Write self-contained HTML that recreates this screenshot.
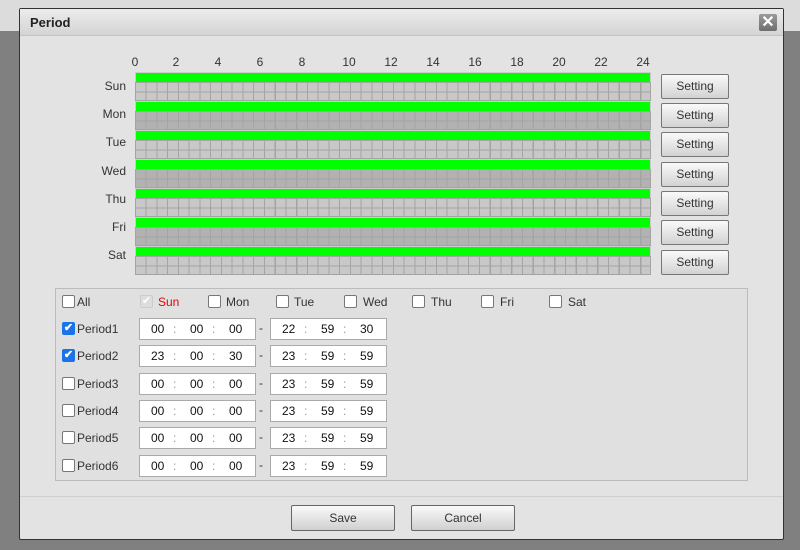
<!DOCTYPE html>
<html><head><meta charset="utf-8"><style>
*{margin:0;padding:0;box-sizing:border-box}
body{width:800px;height:550px;position:relative;overflow:hidden;background:#808080;font-family:"Liberation Sans",Arial,sans-serif;font-size:12px;color:#333}
.a{position:absolute}
#top{left:0;top:0;width:800px;height:31px;background:#dcdcdc}
#dlg{left:19px;top:8px;width:765px;height:532px;background:#e3e3e3;border:1px solid #333;border-radius:2px}
#tb{left:0;top:0;width:763px;height:27px;background:linear-gradient(#ececec,#d4d4d4);border-bottom:1px solid #c4c4c4}
#tb b{position:absolute;left:10px;top:6px;font-size:13px;color:#222}
#x{left:739px;top:5px;width:18px;height:17px;background:linear-gradient(#9a9a9a,#6e6e6e);border-radius:2px;color:#fff;font-size:16px;font-weight:bold;text-align:center;line-height:17px}
.hr{font-size:12px;color:#333;top:55px;width:20px;text-align:center}
.day{left:135px;width:516px;height:29px}
.g{height:10px;background:#00ff00;border:1px solid #ccc;border-bottom:none}
.c{height:19px;background-color:#c8c8c8;background-image:repeating-linear-gradient(90deg,#a4a4a4 0 1px,transparent 1px 10.75px),repeating-linear-gradient(180deg,#a4a4a4 0 1px,transparent 1px 9.5px);border-right:1px solid #a4a4a4;border-bottom:1px solid #a4a4a4}
.dk .c{background-color:#b2b2b2}
.dl{width:40px;text-align:right;left:86px;font-size:12px}
.btn{width:68px;height:25px;left:661px;border:1px solid #777;border-radius:2px;background:linear-gradient(#fafafa,#d2d2d2);text-align:center;line-height:23px;color:#333}
#panel{left:55px;top:288px;width:693px;height:193px;border:1px solid #bcbcbc;background:#e0e0e0}
.cb{width:13px;height:13px;border:1px solid #777;border-radius:2px;background:#fff}
.ck{background:#1a73e8;border-color:#1a73e8;color:#fff;font-size:11px;line-height:11px;text-align:center;font-weight:bold}
.lb{font-size:12px;color:#333}
.in{width:117px;height:22px;border:1px solid #aaa;background:#fff}
.in span{position:absolute;top:3px;font-size:12px;color:#111}
.in i{position:absolute;top:3px;font-style:normal;color:#999}
.dash{font-size:12px;color:#333}
.fb{width:104px;height:26px;border:1px solid #666;border-radius:2px;background:linear-gradient(#fafafa,#d0d0d0);text-align:center;line-height:24px;color:#333}
</style></head><body>
<div id="top" class="a"></div>
<div id="dlg" class="a">
 <div id="tb" class="a"><b>Period</b><div id="x" class="a">✕</div></div>
</div>
<div class="a" style="left:20px;top:496px;width:763px;height:1px;background:#cfcfcf"></div>

<div class="a hr" style="left:125px">0</div><div class="a hr" style="left:166px">2</div><div class="a hr" style="left:208px">4</div><div class="a hr" style="left:250px">6</div><div class="a hr" style="left:292px">8</div><div class="a hr" style="left:339px">10</div><div class="a hr" style="left:381px">12</div><div class="a hr" style="left:423px">14</div><div class="a hr" style="left:465px">16</div><div class="a hr" style="left:507px">18</div><div class="a hr" style="left:549px">20</div><div class="a hr" style="left:591px">22</div><div class="a hr" style="left:633px">24</div>

<div class="a day" style="top:72px"><div class="g"></div><div class="c"></div></div>
<div class="a day dk" style="top:101px"><div class="g"></div><div class="c"></div></div>
<div class="a day" style="top:130px"><div class="g"></div><div class="c"></div></div>
<div class="a day dk" style="top:159px"><div class="g"></div><div class="c"></div></div>
<div class="a day" style="top:188px"><div class="g"></div><div class="c"></div></div>
<div class="a day dk" style="top:217px"><div class="g"></div><div class="c"></div></div>
<div class="a day" style="top:246px"><div class="g"></div><div class="c"></div></div>

<div class="a dl" style="top:79px">Sun</div>
<div class="a dl" style="top:107px">Mon</div>
<div class="a dl" style="top:135px">Tue</div>
<div class="a dl" style="top:164px">Wed</div>
<div class="a dl" style="top:192px">Thu</div>
<div class="a dl" style="top:220px">Fri</div>
<div class="a dl" style="top:248px">Sat</div>

<div class="a btn" style="top:74px">Setting</div>
<div class="a btn" style="top:103px">Setting</div>
<div class="a btn" style="top:132px">Setting</div>
<div class="a btn" style="top:162px">Setting</div>
<div class="a btn" style="top:191px">Setting</div>
<div class="a btn" style="top:220px">Setting</div>
<div class="a btn" style="top:250px">Setting</div>

<div id="panel" class="a"></div>
<div class="a cb" style="left:62px;top:295px"></div><div class="a lb" style="left:77px;top:295px">All</div>
<div class="a cb" style="left:140px;top:295px;background:#ddd;border-color:#ccc;color:#fff;font-size:11px;line-height:11px;text-align:center">✔</div><div class="a lb" style="left:158px;top:295px;color:#e00">Sun</div>
<div class="a cb" style="left:208px;top:295px"></div><div class="a lb" style="left:226px;top:295px">Mon</div>
<div class="a cb" style="left:276px;top:295px"></div><div class="a lb" style="left:294px;top:295px">Tue</div>
<div class="a cb" style="left:344px;top:295px"></div><div class="a lb" style="left:363px;top:295px">Wed</div>
<div class="a cb" style="left:412px;top:295px"></div><div class="a lb" style="left:431px;top:295px">Thu</div>
<div class="a cb" style="left:481px;top:295px"></div><div class="a lb" style="left:500px;top:295px">Fri</div>
<div class="a cb" style="left:549px;top:295px"></div><div class="a lb" style="left:568px;top:295px">Sat</div>

<!-- rows -->
<div class="a cb ck" style="left:62px;top:322px">✔</div><div class="a lb" style="left:77px;top:322px">Period1</div>
<div class="a in" style="left:139px;top:318px"><span style="left:11px">00</span><i style="left:33px">:</i><span style="left:50px">00</span><i style="left:72px">:</i><span style="left:89px">00</span></div>
<div class="a dash" style="left:259px;top:321px">-</div>
<div class="a in" style="left:270px;top:318px"><span style="left:11px">22</span><i style="left:33px">:</i><span style="left:50px">59</span><i style="left:72px">:</i><span style="left:89px">30</span></div>

<div class="a cb ck" style="left:62px;top:349px">✔</div><div class="a lb" style="left:77px;top:349px">Period2</div>
<div class="a in" style="left:139px;top:345px"><span style="left:11px">23</span><i style="left:33px">:</i><span style="left:50px">00</span><i style="left:72px">:</i><span style="left:89px">30</span></div>
<div class="a dash" style="left:259px;top:348px">-</div>
<div class="a in" style="left:270px;top:345px"><span style="left:11px">23</span><i style="left:33px">:</i><span style="left:50px">59</span><i style="left:72px">:</i><span style="left:89px">59</span></div>

<div class="a cb" style="left:62px;top:377px"></div><div class="a lb" style="left:77px;top:377px">Period3</div>
<div class="a in" style="left:139px;top:373px"><span style="left:11px">00</span><i style="left:33px">:</i><span style="left:50px">00</span><i style="left:72px">:</i><span style="left:89px">00</span></div>
<div class="a dash" style="left:259px;top:376px">-</div>
<div class="a in" style="left:270px;top:373px"><span style="left:11px">23</span><i style="left:33px">:</i><span style="left:50px">59</span><i style="left:72px">:</i><span style="left:89px">59</span></div>

<div class="a cb" style="left:62px;top:404px"></div><div class="a lb" style="left:77px;top:404px">Period4</div>
<div class="a in" style="left:139px;top:400px"><span style="left:11px">00</span><i style="left:33px">:</i><span style="left:50px">00</span><i style="left:72px">:</i><span style="left:89px">00</span></div>
<div class="a dash" style="left:259px;top:403px">-</div>
<div class="a in" style="left:270px;top:400px"><span style="left:11px">23</span><i style="left:33px">:</i><span style="left:50px">59</span><i style="left:72px">:</i><span style="left:89px">59</span></div>

<div class="a cb" style="left:62px;top:431px"></div><div class="a lb" style="left:77px;top:431px">Period5</div>
<div class="a in" style="left:139px;top:427px"><span style="left:11px">00</span><i style="left:33px">:</i><span style="left:50px">00</span><i style="left:72px">:</i><span style="left:89px">00</span></div>
<div class="a dash" style="left:259px;top:430px">-</div>
<div class="a in" style="left:270px;top:427px"><span style="left:11px">23</span><i style="left:33px">:</i><span style="left:50px">59</span><i style="left:72px">:</i><span style="left:89px">59</span></div>

<div class="a cb" style="left:62px;top:459px"></div><div class="a lb" style="left:77px;top:459px">Period6</div>
<div class="a in" style="left:139px;top:455px"><span style="left:11px">00</span><i style="left:33px">:</i><span style="left:50px">00</span><i style="left:72px">:</i><span style="left:89px">00</span></div>
<div class="a dash" style="left:259px;top:458px">-</div>
<div class="a in" style="left:270px;top:455px"><span style="left:11px">23</span><i style="left:33px">:</i><span style="left:50px">59</span><i style="left:72px">:</i><span style="left:89px">59</span></div>

<div class="a fb" style="left:291px;top:505px">Save</div>
<div class="a fb" style="left:411px;top:505px">Cancel</div>
</body></html>
